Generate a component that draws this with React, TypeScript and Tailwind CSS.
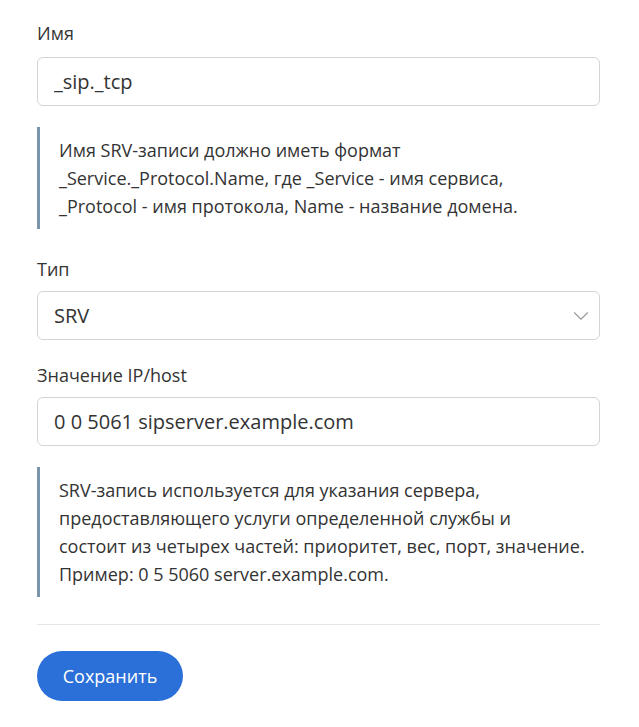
import { ChevronDown } from "lucide-react";

const font = { fontFamily: "'Open Sans', 'Noto Sans', sans-serif" };

function Hint({ children }: { children: React.ReactNode }) {
  return (
    <div className="border-l-[3px] border-[#7b95ab] pl-[19px] py-[9px] text-[18px] leading-[28px] text-[#333]">
      {children}
    </div>
  );
}

export default function App() {
  return (
    <div className="bg-white w-[639px] min-h-[727px] px-[37px] pt-[20px] text-[#333]" style={font}>
      <div className="w-[563px]">
        <label className="block text-[18px] leading-[26px] mb-[11px]">Имя</label>
        <input
          className="w-full h-[49px] rounded-[6px] border border-[#d4d4d4] px-[16px] text-[20px] outline-none"
          defaultValue="_sip._tcp"
        />

        <div className="mt-[21px]">
          <Hint>
            Имя SRV-записи должно иметь формат
            <br />
            _Service._Protocol.Name, где _Service - имя сервиса,
            <br />
            _Protocol - имя протокола, Name - название домена.
          </Hint>
        </div>

        <label className="block text-[18px] leading-[26px] mt-[27px] mb-[9px]">Тип</label>
        <div className="h-[49px] rounded-[6px] border border-[#d4d4d4] pl-[16px] pr-[5px] flex items-center justify-between text-[20px]">
          <span>SRV</span>
          <ChevronDown className="w-[26px] h-[26px] text-[#9a9a9a]" strokeWidth={1} />
        </div>

        <label className="block text-[18px] leading-[26px] mt-[22px] mb-[9px]">Значение IP/host</label>
        <input
          className="w-full h-[49px] rounded-[6px] border border-[#d4d4d4] px-[16px] text-[20px] outline-none"
          defaultValue="0 0 5061 sipserver.example.com"
        />

        <div className="mt-[21px]">
          <Hint>
            SRV-запись используется для указания сервера,
            <br />
            предоставляющего услуги определенной службы и
            <br />
            состоит из четырех частей: приоритет, вес, порт, значение.
            <br />
            Пример: 0 5 5060 server.example.com.
          </Hint>
        </div>

        <div className="h-px bg-[#e6e6e6] mt-[27px]" />

        <button className="mt-[26px] h-[50px] w-[146px] rounded-full bg-[#2b6fd8] text-white text-[18px] font-medium">
          Сохранить
        </button>
      </div>
    </div>
  );
}
